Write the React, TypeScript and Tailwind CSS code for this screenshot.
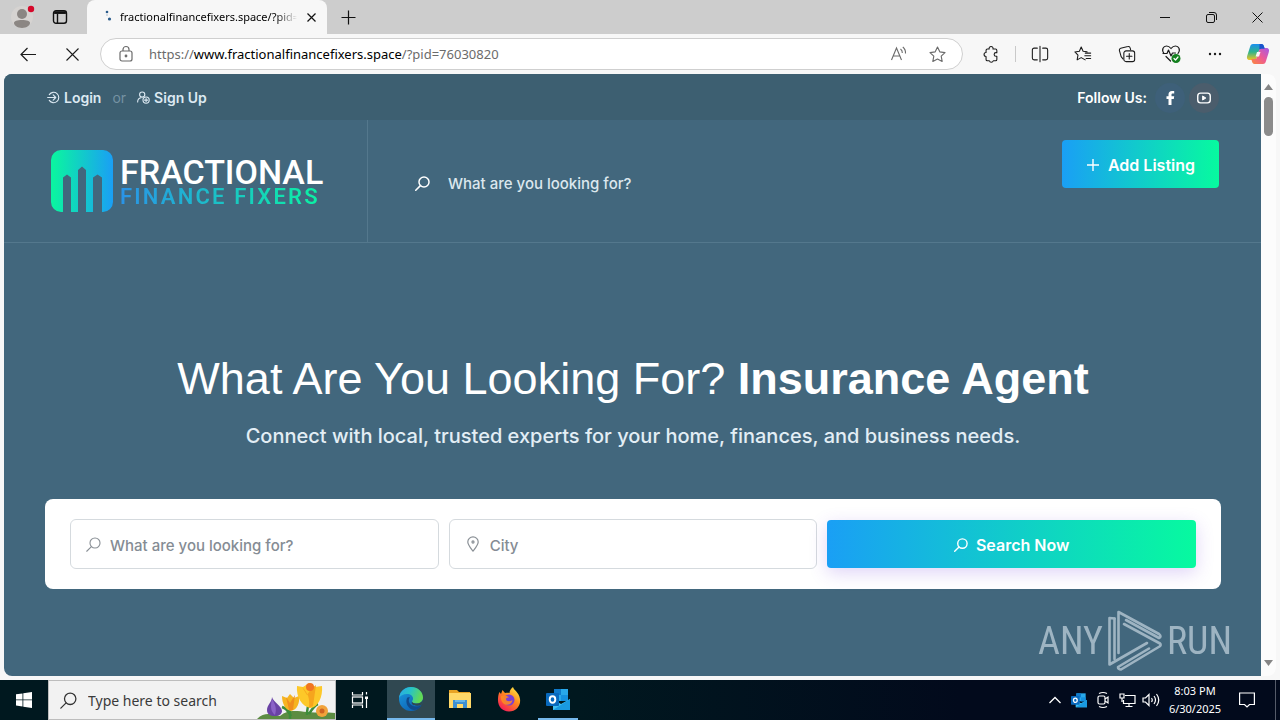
import type { ReactNode } from 'react';

type IconProps = { className?: string; size?: number; children?: ReactNode; width?: number };

function Line({ className = '', size = 20, width = 1.2, children }: IconProps) {
  return (
    <svg
      aria-hidden="true"
      className={`shrink-0 ${className}`}
      width={size}
      height={size}
      viewBox="0 0 20 20"
      fill="none"
      stroke="currentColor"
      strokeWidth={width}
      strokeLinecap="round"
      strokeLinejoin="round"
    >
      {children}
    </svg>
  );
}

function SearchIcon({ size = 16, width = 2, className = '' }: IconProps) {
  return (
    <Line size={size} width={width} className={className}>
      <circle cx="12" cy="8" r="6.7" />
      <path d="M7.2 12.8 1 19" />
    </Line>
  );
}

const star = 'M10 2.2l2.4 5 5.5.8-4 3.8 1 5.5-4.9-2.6-4.9 2.6 1-5.5-4-3.8 5.5-.8z';

function TabStrip() {
  return (
    <header className="flex h-[34px] shrink-0 bg-[#cdcdcd] text-black">
      <button aria-label="Profile" className="ml-2 flex w-7 items-center justify-center">
        <svg width="28" height="28" viewBox="0 0 28 28" aria-hidden="true">
          <circle cx="14" cy="14" r="11" fill="#d6d3d1" />
          <circle cx="14" cy="11" r="5" fill="#8b8683" />
          <path d="M6 20c0-2 3-3 8-3s8 1 8 3-3 5-8 5-8-3-8-5z" fill="#8b8683" />
          <circle cx="23" cy="6" r="3.2" fill="#d5082a" />
        </svg>
      </button>
      <button aria-label="Tab actions" className="ml-4 flex w-4 items-center justify-center">
        <svg width="16" height="16" viewBox="0 0 16 16" fill="none" stroke="#111" strokeWidth="1.4" aria-hidden="true">
          <rect x="1.5" y="1.7" width="13" height="12.6" rx="2.5" />
          <path d="M2 4h12M5.5 5v9" />
          <path d="M2.5 3.5h11" strokeWidth="2.5" />
        </svg>
      </button>
      <div className="ml-[19px] flex w-60 items-center rounded-t-lg bg-[#f7f7f7] pr-[6px] pl-[17px]">
        <svg width="16" height="16" viewBox="0 0 16 16" fill="#2b5c8c" aria-hidden="true" className="shrink-0">
          <circle cx="3" cy="3" r="1.3" />
          <circle cx="5.5" cy="10" r="1.6" />
          <circle cx="3" cy="6" r=".7" opacity=".5" />
        </svg>
        <span className="min-w-0 flex-1 overflow-hidden bg-linear-to-r from-black from-88% to-transparent bg-clip-text text-[11px] whitespace-nowrap text-transparent">
          fractionalfinancefixers.space/?pid=
        </span>
        <button aria-label="Close tab" className="ml-1 flex size-5 items-center justify-center">
          <svg width="9" height="9" viewBox="0 0 9 9" stroke="#111" strokeWidth="1.2" aria-hidden="true">
            <path d="M.5.5l8 8M8.5.5l-8 8" />
          </svg>
        </button>
      </div>
      <button aria-label="New tab" className="ml-[11px] flex w-5 items-center justify-center">
        <svg width="15" height="15" viewBox="0 0 15 15" stroke="#111" strokeWidth="1.2" aria-hidden="true">
          <path d="M7.5.5v14M.5 7.5h14" />
        </svg>
      </button>
      <div className="ml-auto flex">
        <button aria-label="Minimize" className="flex w-[46px] items-center justify-center">
          <svg width="10" height="10" stroke="#111" aria-hidden="true"><path d="M0 5.5h10" /></svg>
        </button>
        <button aria-label="Restore" className="flex w-[46px] items-center justify-center">
          <svg width="11" height="11" viewBox="0 0 11 11" fill="none" stroke="#111" aria-hidden="true">
            <rect x=".5" y="2.5" width="8" height="8" rx="1.5" />
            <path d="M3 .5h5a2.5 2.5 0 0 1 2.5 2.5v5" />
          </svg>
        </button>
        <button aria-label="Close" className="flex w-[46px] items-center justify-center">
          <svg width="11" height="11" viewBox="0 0 11 11" stroke="#111" aria-hidden="true"><path d="M.5.5l10 10M10.5.5l-10 10" /></svg>
        </button>
      </div>
    </header>
  );
}

function CopilotIcon() {
  return (
    <svg width="24" height="24" viewBox="0 0 24 24" aria-hidden="true">
      <defs>
        <linearGradient id="cpA" x1="0" y1="0" x2="0" y2="1">
          <stop offset="0" stopColor="#1b8ff0" /><stop offset=".5" stopColor="#2fb48c" /><stop offset="1" stopColor="#f2c522" />
        </linearGradient>
        <linearGradient id="cpB" x1="1" y1="0" x2="0" y2="1">
          <stop offset="0" stopColor="#a45ae8" /><stop offset=".5" stopColor="#ee5a94" /><stop offset="1" stopColor="#fb8a3c" />
        </linearGradient>
      </defs>
      <path d="M7 2h8.500c1.500 0 2 1 2.500 2.500l.7 2.300h-3.200c-1.500 0-2.300.8-2.700 2.200l-2 6.500c-.5 1.500-1.300 2.500-3 2.500H4c-3 0-3.500-2-2.700-4.500L4 5c.5-1.800 1.300-3 3-3z" fill="url(#cpA)" />
      <path d="M17 22H8.500c-1.500 0-2-1-2.500-2.500L5.300 17h3.200c1.500 0 2.300-.8 2.700-2.200l2-6.500c.5-1.500 1.300-2.300 3-2.300H20c3 0 3.500 2 2.700 4.500L20 19c-.5 1.800-1.300 3-3 3z" fill="url(#cpB)" />
      <path d="M13.500 2h2c1.500 0 2 1 2.500 2.500l.7 2.300h-3.200c-1 0-1.700.3-2.200 1z" fill="#1a54cc" />
      <path d="M11 10h3.500l-1.500 4.500H9.600z" fill="#f7f7f7" />
    </svg>
  );
}

function Toolbar() {
  const tool = 'flex w-11 items-center justify-center';
  return (
    <nav aria-label="Browser toolbar" className="flex h-10 shrink-0 items-stretch bg-[#f7f7f7] pr-px text-[#1b1b1b]">
      <button aria-label="Back" className="ml-4 flex w-6 items-center justify-center">
        <svg width="17" height="15" viewBox="0 0 17 15" fill="none" stroke="currentColor" strokeWidth="1.2" aria-hidden="true">
          <path d="M16 7.5H1M7.5 1 1 7.5 7.5 14" />
        </svg>
      </button>
      <button aria-label="Stop" className="ml-5 flex w-6 items-center justify-center">
        <svg width="13" height="13" viewBox="0 0 13 13" stroke="currentColor" strokeWidth="1.1" aria-hidden="true"><path d="M.5.5l12 12M12.5.5l-12 12" /></svg>
      </button>
      <div className="my-1 ml-4 flex min-w-0 flex-1 items-center rounded-full border border-[#cfcfcf] bg-white pr-[15px] pl-[17px] text-[#6b6b6b]">
        <svg width="16" height="18" viewBox="0 0 16 18" fill="none" stroke="currentColor" strokeWidth="1.2" aria-hidden="true" className="shrink-0">
          <rect x="2" y="6" width="12" height="10" rx="2" />
          <path d="M5 6V4.500a3 3 0 0 1 6 0V6" />
          <circle cx="8" cy="11" r=".8" fill="currentColor" />
        </svg>
        <div className="ml-[15px] flex-1 truncate pt-px text-[13px]">
          https://<span className="text-black">www.fractionalfinancefixers.space</span>/?pid=76030820
        </div>
        <button aria-label="Read aloud" className="flex w-[38px] items-center justify-start">
          <svg width="18" height="16" viewBox="0 0 18 16" fill="none" stroke="currentColor" strokeWidth="1.1" aria-hidden="true">
            <path d="M1.500 14 6.500 2l5 12M3.300 10h6.400M10.500 3q2 1.500 1.800 4M12.800 1q3 2.500 2.700 6.500" />
          </svg>
        </button>
        <button aria-label="Add to favorites"><Line size={19}><path d={star} /></Line></button>
      </div>
      <button aria-label="Extensions" className="ml-2 flex w-10 items-center justify-center">
        <Line size={18}>
          <path d="M4.500 6A1.500 1.500 0 0 1 6 4.500h2a2.200 2.200 0 1 1 4.200 0H15A1.500 1.500 0 0 1 16.500 6v2.500h-1a2 2 0 0 0 0 4h1V16a1.500 1.500 0 0 1-1.500 1.500h-2.500a2.200 2.200 0 0 1-4.300 0H6A1.500 1.500 0 0 1 4.500 16v-3.300a2.200 2.200 0 0 1 0-4.400z" />
        </Line>
      </button>
      <span className="my-3 mr-[3px] ml-1 w-px bg-[#c9c9c9]" />
      <button aria-label="Split screen" className="flex w-[42px] items-center justify-center">
        <Line size={18}><path d="M7 3.500H3.500a2 2 0 0 0-2 2v9a2 2 0 0 0 2 2H7M13 3.500h3.500a2 2 0 0 1 2 2v9a2 2 0 0 1-2 2H13M10 1.500v17" /></Line>
      </button>
      <button aria-label="Favorites" className={tool}>
        <Line size={18}><path d="M12.500 16.500 8 14l-4.500 2.500.9-5.200L1 7.700l5-.8L8 2.300l2.100 4.600 4.400.7M12.500 9h6M12 12h6.500M13.500 15h5" /></Line>
      </button>
      <button aria-label="Collections" className={tool}>
        <Line size={18}><path d="M5.500 15.500 3.500 13 1.600 6.200a2 2 0 0 1 1.400-2.500l8-2a2 2 0 0 1 2.500 1.500l.5 2" /><rect x="6.500" y="6.500" width="12" height="12" rx="2.500" /><path d="M12.500 9.500v6M9.500 12.500h6" /></Line>
      </button>
      <button aria-label="Browser essentials" className={tool}>
        <Line size={20}>
          <path d="M3 9.500C0 5.500 2.500 2 5.500 2 8 2 10 4.500 10 4.500S12 2 14.500 2c3 0 5.500 3.500 2.500 7.500M2 9.500h4L7.500 6 10 12l1.500-3h3M5 12.500l4.500 4.500" />
          <circle cx="15" cy="14.500" r="4.500" fill="#14801f" stroke="none" />
          <path d="M13 14.500l1.500 1.500 2.500-3" stroke="#fff" />
        </Line>
      </button>
      <button aria-label="More" className="flex w-11 items-center justify-center">
        <svg width="14" height="4" viewBox="0 0 14 4" fill="currentColor" aria-hidden="true"><circle cx="2" cy="2" r="1.200" /><circle cx="7" cy="2" r="1.200" /><circle cx="12" cy="2" r="1.200" /></svg>
      </button>
      <button aria-label="Copilot" className="flex w-[42px] items-center justify-center"><CopilotIcon /></button>
    </nav>
  );
}

function LogoMark() {
  return (
    <svg width="62" height="62" viewBox="0 0 62 62" aria-hidden="true" className="shrink-0">
      <defs>
        <linearGradient id="mark" x1="0" x2="1">
          <stop offset="0.05" stopColor="#0bf3a2" /><stop offset="1" stopColor="#1a9ff5" />
        </linearGradient>
      </defs>
      <path fill="url(#mark)" d="M10 0h42a10 10 0 0 1 10 10v42a10 10 0 0 1-10 10h-1V27.500l-4.500-3-4.500 3V62h-7V20l-4-3.500-4 3.500v42h-7V27.500l-4-3-4 3V62h-2A10 10 0 0 1 0 52V10A10 10 0 0 1 10 0z" />
    </svg>
  );
}

function SiteTop() {
  return (
    <>
      <div className="flex h-[46px] items-center justify-between bg-[#3d5f71] pt-px pr-[42px] pl-[43px] text-sm font-semibold text-[#dce9f2]">
        <div className="flex items-center">
          <a href="#login" className="flex items-center gap-1">
            <Line size={13} width={1.7}><path d="M3.500 5.500a8 8 0 1 1 0 9M1 10h12M9.500 6l4 4-4 4" /></Line>
            Login
          </a>
          <span className="mx-[11px] font-normal text-[#7592a3]">or</span>
          <a href="#signup" className="flex items-center gap-1">
            <Line size={13} width={1.7}><circle cx="8" cy="5.500" r="4" /><path d="M1 17c0-4 2-6 5-6.500" /><circle cx="14" cy="14" r="4.800" /><path d="M14 11.500v5M11.500 14h5" /></Line>
            Sign Up
          </a>
        </div>
        <div className="flex items-center text-white">
          Follow Us:
          <a href="#facebook" aria-label="Facebook" className="ml-2 flex size-[30px] items-center justify-center rounded-full bg-[#3e6079]">
            <svg width="9" height="14" viewBox="0 0 9 14" fill="#fff" aria-hidden="true"><path d="M2.500 14V8H.5V5.300h2V3.500C2.500 1.200 3.800 0 6 0h2.200v2.500H6.800c-1 0-1.300.5-1.300 1.300v1.500h2.700L7.800 8H5.500v6z" /></svg>
          </a>
          <a href="#youtube" aria-label="YouTube" className="ml-1 flex size-[30px] items-center justify-center rounded-full bg-[#4b5d6c]">
            <svg width="14" height="12" viewBox="0 0 15 12" fill="none" stroke="#fff" strokeWidth="1.500" aria-hidden="true"><rect x=".8" y=".8" width="13.400" height="10.400" rx="3" /><path d="M6 3.800v4.400L9.500 6z" fill="#fff" strokeWidth="1" /></svg>
          </a>
        </div>
      </div>
      <div className="flex h-[123px] border-b border-[#54788d]">
        <a href="#home" className="flex w-[364px] shrink-0 items-center gap-[7px] border-r border-[#54788d] pl-[47px] font-['Roboto',sans-serif]">
          <LogoMark />
          <span className="flex flex-col pt-1">
            <span className="text-[34px] leading-7 font-medium text-white">FRACTIONAL</span>
            <span className="bg-linear-to-r/srgb from-[#2a93e8] to-[#0bf3a2] bg-clip-text text-[22px] leading-[22px] font-semibold tracking-widest text-transparent">FINANCE FIXERS</span>
          </span>
        </a>
        <div className="flex min-w-0 flex-1 items-center pt-[5px] pl-[47px] text-white">
          <label htmlFor="site-search"><SearchIcon size={15} /></label>
          <input id="site-search" aria-label="Search the site" placeholder="What are you looking for?" className="ml-[18px] h-10 w-80 text-[15px] font-medium outline-none placeholder:text-[#dce7ee]" />
        </div>
        <button className="mt-5 mr-[42px] flex h-12 w-[157px] shrink-0 items-center justify-center gap-2 rounded bg-linear-to-r/srgb from-[#1a9ff5] to-[#07fa9f] pt-[2px] text-base font-semibold text-white">
          <svg width="14" height="14" viewBox="0 0 14 14" stroke="currentColor" strokeWidth="1.400" aria-hidden="true"><path d="M7 1v12M1 7h12" /></svg>
          Add Listing
        </button>
      </div>
    </>
  );
}

function Hero() {
  const field = 'flex h-[50px] min-w-0 items-center rounded-md border border-[#d5dade] bg-white pl-[15px] text-[#8a9096]';
  const input = 'h-full min-w-0 flex-1 pt-[3px] text-[15px] font-medium outline-none placeholder:text-[#858c94]';
  return (
    <main className="pt-[110px] pr-10 pl-[41px] text-center">
      <h1 className="font-['Liberation_Sans',Arial,sans-serif] text-[45px] leading-[52px] text-white">
        What Are You Looking For? <strong>Insurance Agent</strong>
      </h1>
      <p className="mt-4 text-[20px] leading-[30px] font-medium text-[#e3eef5]">
        Connect with local, trusted experts for your home, finances, and business needs.
      </p>
      <form className="mt-12 grid grid-cols-3 items-center gap-[10px] rounded-lg bg-white px-[25px] py-5 text-left" onSubmit={(e) => e.preventDefault()}>
        <div className={field}>
          <label htmlFor="what" className="mr-[9px]"><SearchIcon size={15} width={1.5} /></label>
          <input id="what" aria-label="What are you looking for?" placeholder="What are you looking for?" className={input} />
        </div>
        <div className={field}>
          <label htmlFor="city" className="mr-[9px]">
            <Line size={16} width={1.5}><path d="M10 19C7 15 3.500 11 3.500 7.500a6.500 6.500 0 0 1 13 0C16.500 11 13 15 10 19z" /><circle cx="10" cy="7.500" r="1.300" /></Line>
          </label>
          <input id="city" aria-label="City" placeholder="City" className={input} />
        </div>
        <button className="flex h-12 items-center justify-center gap-2 rounded bg-linear-to-r/srgb from-[#1a9ff5] to-[#07fa9f] pt-[2px] text-base font-semibold text-white shadow-[0_5px_18px_rgba(110,60,220,0.22)]">
          <SearchIcon size={14} /> Search Now
        </button>
      </form>
    </main>
  );
}

function Watermark() {
  return (
    <div className="pointer-events-none absolute right-[29px] bottom-1 flex items-center gap-1 font-['Liberation_Sans_Narrow','Roboto_Condensed','Liberation_Sans',sans-serif] text-[38px] leading-none text-[#a9bdca] opacity-90">
      <span>ANY</span>
      <svg width="56" height="62" viewBox="0 0 56 62" fill="none" stroke="currentColor" strokeWidth="2.600" strokeLinejoin="round" strokeLinecap="round" aria-hidden="true">
        <path d="M7.500 8.500 2.500 8v46.500L40 33" />
        <path d="M11.500 43V2L52 24q3 2.500 0 4L19 10" />
        <path d="M7.500 8.500v40.500" />
        <path d="M17 14 53 33.500q1.500 1.500-.500 3L14 59.500q-3 0-3-2.500L42 38.500" />
      </svg>
      <span>RUN</span>
    </div>
  );
}

function Scrollbar() {
  return (
    <div className="flex w-[15px] shrink-0 flex-col items-center rounded-r-lg bg-[#fcfcfc] py-[10px]" aria-hidden="true">
      <svg width="9" height="6" viewBox="0 0 9 6" fill="#858585"><path d="M4.500 0 9 6H0z" /></svg>
      <div className="mt-[7px] h-[39px] w-[9px] rounded-full bg-[#8b8b8b]" />
      <svg width="9" height="6" viewBox="0 0 9 6" fill="#858585" className="mt-auto"><path d="M0 0h9L4.500 6z" /></svg>
    </div>
  );
}

function EdgeIcon() {
  return (
    <svg width="26" height="26" viewBox="0 0 26 26" aria-hidden="true">
      <defs>
        <linearGradient id="edgeTop" x1="0" y1="0" x2="1" y2=".3"><stop offset="0" stopColor="#2ba6ea" /><stop offset=".5" stopColor="#27c3c7" /><stop offset="1" stopColor="#62da55" /></linearGradient>
        <linearGradient id="edgeLow" x1="0" y1="0" x2=".8" y2="1"><stop offset="0" stopColor="#1b9de2" /><stop offset="1" stopColor="#0c5cae" /></linearGradient>
      </defs>
      <circle cx="13" cy="13" r="12" fill="url(#edgeLow)" />
      <path d="M1 12C2 5 7 1 13 1c7 0 12 5 12 10.500 0 4-3 6-6.500 6-3 0-4.500-1-4.500-2 0-.8 1-1 1-3 0-2.500-2.500-4.500-6-4.500-4 0-7 2-8 4z" fill="url(#edgeTop)" />
      <path d="M9 12c-2 5 1 11 7 12 3 0 6-2 7.500-5-5 3-11 1.500-12.500-3-.5-2 0-3.500 1-4.500-1-.5-2.500-.5-3 .5z" fill="#114a8b" />
      <path d="M24 18.500c-1 .8-3 1.300-5 1.200-4 0-6-1.700-5-4.200.5 1.500 2.500 2 4.500 2 3 0 5.500-1.200 6.500-4 0 2-.3 3.500-1 5z" fill="#304851" />
    </svg>
  );
}

function FolderIcon() {
  return (
    <svg width="24" height="22" viewBox="0 0 24 22" aria-hidden="true">
      <path d="M1 2h8l2 2h11v16H1z" fill="#e8a325" /><path d="M1 5h22v15H1z" fill="#ffd868" />
      <path d="M5 20v-8h14v8h-4v-4H9v4z" fill="#3d8fd1" /><path d="M7 14h10v-2H7z" fill="#65b5e9" />
    </svg>
  );
}

function FirefoxIcon() {
  return (
    <svg width="24" height="25" viewBox="0 0 24 25" aria-hidden="true">
      <defs><linearGradient id="fox" x1=".9" y1="0" x2=".2" y2="1"><stop offset="0" stopColor="#fff24a" /><stop offset=".45" stopColor="#ff8a1d" /><stop offset="1" stopColor="#f5155c" /></linearGradient></defs>
      <path d="M2.500 5 4 7l1.500-4L8 6c2-.5 3-.5 4.500 0C12.500 3.500 14 1.500 16 0c.5 3 6 5 7 12 1 7-4 12.500-11 12.500S.5 19 1 12c.1-3 .5-5 1.500-7z" fill="url(#fox)" />
      <circle cx="12" cy="13" r="5.500" fill="#7b3fd2" /><path d="M4 9c3-1 6-.5 8 1.500-2 0-3 .5-3 1.500 0 2.500 4 3 6.500 1-.5 5-7 6.500-10 2.500C4 13.500 3.500 11 4 9z" fill="#ff8a20" opacity=".9" />
    </svg>
  );
}

function OutlookIcon({ size = 24 }: { size?: number }) {
  return (
    <svg width={size} height={size} viewBox="0 0 24 24" aria-hidden="true">
      <path d="M8 2h14v12H8z" fill="#28a8ea" /><path d="M8 2h7v6H8z" fill="#0f7acb" /><path d="M15 8h7v6h-7z" fill="#1490df" />
      <path d="M7 12l8 5 9-5v11H7z" fill="#3fc0f2" /><path d="M7 23 24 12v11z" fill="#1a9ae0" />
      <rect y="6" width="13" height="13" rx="1" fill="#0869bd" />
      <ellipse cx="6.500" cy="12.500" rx="2.800" ry="3.200" fill="none" stroke="#fff" strokeWidth="1.900" />
    </svg>
  );
}

function Flowers() {
  return (
    <svg width="78" height="39" viewBox="0 0 78 39" aria-hidden="true">
      <path d="M0 39c8-8 16-4 23-3 8-7 17-5 27-4 10 1 20 0 28 1v6z" fill="#5c8c42" />
      <path d="M33 39V27m17 8c0-5 0-8 3-14M34 36c-4-7-6-8-9-9M52 34c3-5 6-9 9-10" fill="none" stroke="#3d8c3a" strokeWidth="2.500" />
      <path d="M15 17c0 5-5 8-5 13 0 4 3 6 8 6 4 0 7-2 7-5 0-5-9-9-10-14z" fill="#6a43a5" /><path d="M15 19c3 5 5 9 3 16-4-3-5-8-3-16z" fill="#8b62c7" />
      <path d="M25 16l5 2 3-4 4 4 5-2c1 7-2 14-8 15-6-1-9-8-9-15z" fill="#f6b421" /><path d="M29 17l4 6 5-8-2 15h-4z" fill="#ef8e1f" />
      <path d="M40 6l6 1 6-4 6 4 7-1c1 11-4 21-11 22-9-1-15-11-14-22z" fill="#fdc829" /><path d="M45 7l5 8 4-6 5-4-3 21-4 2c1-10-1-15-7-21z" fill="#f6a51d" /><circle cx="53" cy="7" r="4" fill="#f17622" />
      <circle cx="65" cy="31" r="6" fill="#f1a33b" /><circle cx="65" cy="31" r="2.500" fill="#cf6422" />
    </svg>
  );
}

function Taskbar() {
  const app = 'flex w-12 items-center justify-center border-b-2';
  return (
    <footer className="flex h-10 shrink-0 bg-linear-to-r from-[#00181f] from-45% to-[#020a1c] to-75% text-white">
      <button aria-label="Start" className="flex w-12 items-center justify-center">
        <svg width="16" height="16" viewBox="0 0 16 16" fill="#fff" aria-hidden="true"><path d="M0 2.300 6.500 1.400v6.100H0zM7.300 1.300 16 0v7.500H7.300zM0 8.300h6.500v6.200L0 13.600zM7.300 8.300H16V16l-8.700-1.300z" /></svg>
      </button>
      <label className="flex w-[288px] items-center border border-[#bdbdbd] bg-[#f2f2f2] pl-[11px] text-[#333]">
        <SearchIcon size={17} width={1.5} />
        <input aria-label="Type here to search" placeholder="Type here to search" className="ml-[11px] min-w-0 flex-1 text-[14px] outline-none placeholder:text-[#3a3a3a]" />
        <span className="self-end"><Flowers /></span>
      </label>
      <button aria-label="Task view" className="mr-[3px] flex w-12 items-center justify-center">
        <svg width="18" height="18" viewBox="0 0 18 18" fill="none" stroke="#fff" strokeWidth="1.200" aria-hidden="true">
          <path d="M1.500 1v3h10V1M1.500 17v-3h10v3M15.500 1v2.500M15.500 8v9" /><rect x="1.500" y="6" width="10" height="6" /><path d="M14 5.500h3v2.500h-3z" fill="#fff" stroke="none" />
        </svg>
      </button>
      <button aria-label="Microsoft Edge" className={`${app} border-[#76b9ed] bg-[#304851]`}><EdgeIcon /></button>
      <button aria-label="File Explorer" className={`${app} ml-px border-transparent`}><FolderIcon /></button>
      <button aria-label="Firefox" className={`${app} ml-px border-transparent`}><FirefoxIcon /></button>
      <button aria-label="Outlook" className="ml-[5px] flex w-10 items-center justify-center border-b-2 border-[#76b9ed]"><OutlookIcon /></button>
      <div className="ml-auto flex items-stretch">
        <button aria-label="Show hidden icons" className="flex w-6 items-center justify-center">
          <svg width="12" height="8" viewBox="0 0 12 8" fill="none" stroke="#fff" strokeWidth="1.300" aria-hidden="true"><path d="M.5 7 6 1.500 11.500 7" /></svg>
        </button>
        <button aria-label="Outlook notifications" className="flex w-6 items-center justify-center"><OutlookIcon size={16} /></button>
        <button aria-label="Camera" className="flex w-6 items-center justify-center">
          <svg width="12" height="18" viewBox="0 0 12 18" fill="none" stroke="#fff" strokeWidth="1.200" aria-hidden="true"><rect x="1" y="5" width="7" height="8" rx="1.500" /><path d="M8 8l3-2v6l-3-2M2 2.500q4-2 8 0M2 15.500q4 2 8 0" /></svg>
        </button>
        <button aria-label="Network" className="flex w-6 items-center justify-center">
          <svg width="17" height="15" viewBox="0 0 17 15" fill="none" stroke="#fff" strokeWidth="1.200" aria-hidden="true"><path d="M6 2.500h10v8H4.500V7M10 10.500v3M6.500 13.500h7M1 1h4v4H1zM3 5v4" /></svg>
        </button>
        <button aria-label="Volume" className="flex w-6 items-center justify-center">
          <svg width="18" height="16" viewBox="0 0 18 16" fill="none" stroke="#fff" strokeWidth="1.200" aria-hidden="true"><path d="M1 6h2.500L7 2.500v11L3.500 10H1zM9.500 6q1.500 2 0 4M12 4q3 4 0 8M14.500 2q4.500 6 0 12" /></svg>
        </button>
        <div className="flex w-16 flex-col justify-center text-center text-[11px] leading-[18px]">
          <time>8:03 PM</time>
          <time>6/30/2025</time>
        </div>
        <button aria-label="Notifications" className="flex w-10 items-center justify-center">
          <svg width="16" height="16" viewBox="0 0 16 16" fill="none" stroke="#fff" strokeWidth="1.200" aria-hidden="true"><path d="M.6 1h14.800v11.500H10.500L8 15l-2.500-2.500H.6z" /></svg>
        </button>
        <span className="mr-1 ml-2 w-px bg-[#555b69]" />
      </div>
    </footer>
  );
}

export default function App() {
  return (
    <div className="flex h-screen flex-col overflow-hidden bg-[#f7f7f7] font-['Noto_Sans','Open_Sans',sans-serif]">
      <TabStrip />
      <Toolbar />
      <div className="mx-1 mb-1 flex min-h-0 flex-1 overflow-hidden rounded-lg">
        <div className="relative min-w-0 flex-1 overflow-hidden bg-[#42677d] font-['Inter',sans-serif]">
          <SiteTop />
          <Hero />
          <Watermark />
        </div>
        <Scrollbar />
      </div>
      <Taskbar />
    </div>
  );
}
